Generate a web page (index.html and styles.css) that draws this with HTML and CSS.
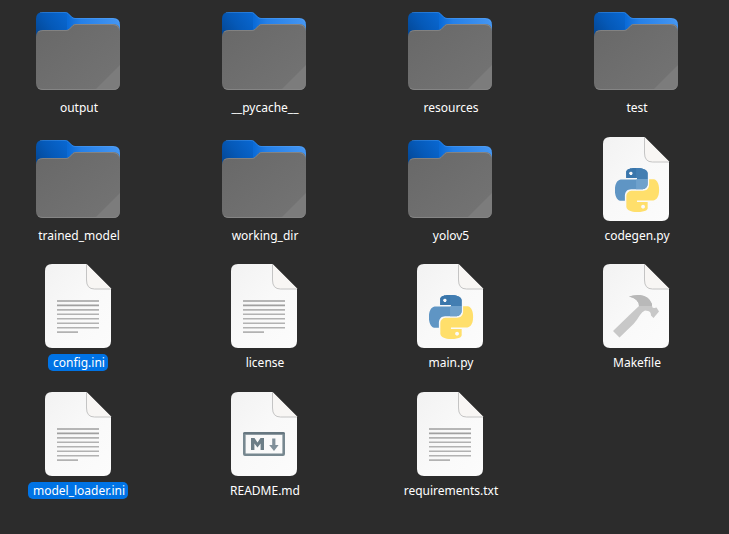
FILE: index.html
```html
<!DOCTYPE html>
<html lang="en">
<head>
<meta charset="utf-8">
<title>Files</title>
<link rel="stylesheet" href="styles.css">
</head>
<body>
<svg class="defs" width="0" height="0" aria-hidden="true">
  <defs>
    <linearGradient id="back" gradientUnits="userSpaceOnUse" x1="6" y1="36" x2="42" y2="9">
      <stop offset="0" stop-color="#03448f"/><stop offset="0.45" stop-color="#0559b8"/><stop offset="1" stop-color="#0a6bd8"/>
    </linearGradient>
    <linearGradient id="lip" gradientUnits="userSpaceOnUse" x1="38" y1="0" x2="90" y2="0">
      <stop offset="0" stop-color="#0a6bd8"/><stop offset="0.25" stop-color="#2580e8"/><stop offset="1" stop-color="#4596f2"/>
    </linearGradient>
    <linearGradient id="front" x1="0" y1="0" x2="1" y2="1">
      <stop offset="0" stop-color="#686868"/><stop offset="1" stop-color="#747474"/>
    </linearGradient>
    <linearGradient id="paper" x1="0" y1="0" x2="1" y2="1">
      <stop offset="0" stop-color="#f2f2f2"/><stop offset="0.5" stop-color="#f9f9f9"/><stop offset="1" stop-color="#fcfcfc"/>
    </linearGradient>
    <path id="snake" d="M14.25.18l.9.2.73.26.59.3.45.32.34.34.25.34.16.33.1.3.04.26.02.2-.01.13V8.5l-.05.63-.13.55-.21.46-.26.38-.3.31-.33.25-.35.19-.35.14-.33.1-.3.07-.26.04-.21.02H8.77l-.69.05-.59.14-.5.22-.41.27-.33.32-.27.35-.2.36-.15.37-.1.35-.07.32-.04.27-.02.21v3.06H3.17l-.21-.03-.28-.07-.32-.12-.35-.18-.36-.26-.36-.36-.35-.46-.32-.59-.28-.73-.21-.88-.14-1.05-.05-1.23.06-1.22.16-1.04.24-.87.32-.71.36-.57.4-.44.42-.33.42-.24.4-.16.36-.1.32-.05.24-.01h.16l.06.01h8.16v-.83H6.18l-.01-2.75-.02-.37.05-.34.11-.31.17-.28.25-.26.31-.23.38-.2.44-.18.51-.15.58-.12.64-.1.71-.06.77-.04.84-.02 1.27.05zm-6.3 1.98l-.23.33-.08.41.08.41.23.34.33.22.41.09.41-.09.33-.22.23-.34.08-.41-.08-.41-.23-.33-.33-.22-.41-.09-.41.09z"/>
    <clipPath id="snake-clip"><use href="#snake"/></clipPath>
    <path id="hammer-shape" d="M41 38.500q5-2 11-1.500 9 1 12 9v1.500q0 3 2.500 2.500l2-.5 2.500 4-5.500 6.500-2.500-2.500q0-4-3-4.500l-3-.5q-3 1-5 4.500-3 5-6.500 9L31.500 79.500 25 73l17-16.500 9-8.500q0-7-10-9.500z"/>
    <clipPath id="hammer-clip"><use href="#hammer-shape"/></clipPath>
    <symbol id="folder" viewBox="0 0 96 96">
      <path d="M6 50V16q0-7 7-7h22q2 0 3 1l4 4q1 1 3 1v35z" fill="url(#back)"/>
      <path d="M37 9.500l5 4.500q1 1 3 1h38q7 0 7 7v20H37z" fill="url(#lip)"/>
      <path d="M10 9.500h25q2 0 3 1l4 4q1 1 3 1h38q5 0 6 4" fill="none" stroke="#6aaef8" stroke-opacity=".3"/>
      <path d="M6 34q0-7 7-7h23q2 0 3-1l4-4q1-1 3-1h37q7 0 7 7v52q0 7-7 7H13q-7 0-7-7z" fill="url(#front)"/>
      <path d="M8 29q2-1.500 5-1.500h23q2 0 3-1l4-4q1-1 3-1h37q5 0 6 4" fill="none" stroke="#999" stroke-opacity=".5"/>
      <path d="M90 62v18q0 7-7 7H65z" fill="#7c7c7c"/>
      <path d="M8 85q2 1.500 5 1.500h70q3 0 5-1.500" fill="none" stroke="#858585"/>
    </symbol>
    <symbol id="page" viewBox="0 0 96 96">
      <path d="M22 6h34.500L81 30.500V83q0 7-7 7H22q-7 0-7-7V13q0-7 7-7z" fill="url(#paper)"/>
      <path d="M56.500 6v16q0 9 8 9h16.500v-.5z" fill="#f8f6f4"/>
      <path d="M56.500 6v16q0 9 8 9H81" fill="none" stroke="#c4c4c4"/>
    </symbol>
    <symbol id="text" viewBox="0 0 96 96">
      <use href="#page"/>
      <path d="M27 43h42M27 47.400h42" stroke="#a0a0a0" stroke-width="1.600"/>
      <path d="M27 51.900h42M27 56.300h42M27 60.800h42M27 65.200h42M27 69.700h42M27 74.100h21" stroke="#b2b2b2" stroke-width="1.600"/>
    </symbol>
    <symbol id="python" viewBox="0 0 96 96">
      <use href="#page"/>
      <g transform="translate(27 37) scale(1.833)">
        <g clip-path="url(#snake-clip)"><path d="M0 0h24v24H0z" fill="#5f95c4"/><path d="M0 0h24v6H0z" fill="#437eb2"/><path d="M0 0h11.500v6H0z" fill="#3a76ab"/><path d="M11.500 6H24v8H11.500z" fill="#6fa1cc"/></g>
        <g transform="rotate(180 12 12)"><use href="#snake" fill="#ffdf6b"/></g>
      </g>
    </symbol>
    <symbol id="hammer" viewBox="0 0 96 96">
      <use href="#page"/>
      <g clip-path="url(#hammer-clip)"><path d="M20 30h56v52H20z" fill="#c8c8c8"/><path d="M20 30h56v18H20z" fill="#b9b9b9"/></g>
    </symbol>
    <symbol id="markdown" viewBox="0 0 96 96">
      <use href="#page"/>
      <path d="M29 47.300h38q.7 0 .7.700v20q0 .7-.7.700H29q-.7 0-.7-.700V48q0-.7.700-.700z" fill="none" stroke="#778890" stroke-width="2.600" stroke-linejoin="round"/>
      <path d="M28.300 48q0-.7.700-.700h38q.7 0 .7.700" fill="none" stroke="#677780" stroke-width="2.600"/>
      <path d="M35 64V52h3.500l3 4.500 3-4.500H48v12h-3.400v-6.500l-3.100 4-3.100-4V64z" fill="#6c7d86"/>
      <path d="M56.200 52.500h3.200V59h3.200L58 65l-4.800-6h3z" fill="#80909a"/>
    </symbol>
  </defs>
</svg>
<main class="files">
  <figure class="file"><svg class="icon"><use href="#folder"/></svg><figcaption class="name">output</figcaption></figure>
  <figure class="file"><svg class="icon"><use href="#folder"/></svg><figcaption class="name">__pycache__</figcaption></figure>
  <figure class="file"><svg class="icon"><use href="#folder"/></svg><figcaption class="name">resources</figcaption></figure>
  <figure class="file"><svg class="icon"><use href="#folder"/></svg><figcaption class="name">test</figcaption></figure>
  <figure class="file"><svg class="icon"><use href="#folder"/></svg><figcaption class="name">trained_model</figcaption></figure>
  <figure class="file"><svg class="icon"><use href="#folder"/></svg><figcaption class="name">working_dir</figcaption></figure>
  <figure class="file"><svg class="icon"><use href="#folder"/></svg><figcaption class="name">yolov5</figcaption></figure>
  <figure class="file"><svg class="icon"><use href="#python"/></svg><figcaption class="name">codegen.py</figcaption></figure>
  <figure class="file"><svg class="icon"><use href="#text"/></svg><figcaption class="name selected">config.ini</figcaption></figure>
  <figure class="file"><svg class="icon"><use href="#text"/></svg><figcaption class="name">license</figcaption></figure>
  <figure class="file"><svg class="icon"><use href="#python"/></svg><figcaption class="name">main.py</figcaption></figure>
  <figure class="file"><svg class="icon"><use href="#hammer"/></svg><figcaption class="name">Makefile</figcaption></figure>
  <figure class="file"><svg class="icon"><use href="#text"/></svg><figcaption class="name selected">model_loader.ini</figcaption></figure>
  <figure class="file"><svg class="icon"><use href="#markdown"/></svg><figcaption class="name">README.md</figcaption></figure>
  <figure class="file"><svg class="icon"><use href="#text"/></svg><figcaption class="name">requirements.txt</figcaption></figure>
</main>
</body>
</html>
```
FILE: styles.css
```css
* { box-sizing: border-box; }
body {
  margin: 0;
  background: #2c2c2c;
  color: #fff;
  font: 12px/17px "Noto Sans", sans-serif;
}
.defs { position: absolute; }
.files {
  display: grid;
  grid-template-columns: repeat(4, 1fr);
  grid-auto-rows: 1fr;
  column-gap: 58px;
  min-height: 100vh;
  padding: 3px 29px 21px 14px;
}
.file {
  display: flex;
  flex-direction: column;
  align-items: center;
  margin: 0;
}
.icon { width: 96px; height: 96px; }
.name { padding: 0 3px 0 5px; border-radius: 5px; }
.selected { background: #0073e5; }
```
